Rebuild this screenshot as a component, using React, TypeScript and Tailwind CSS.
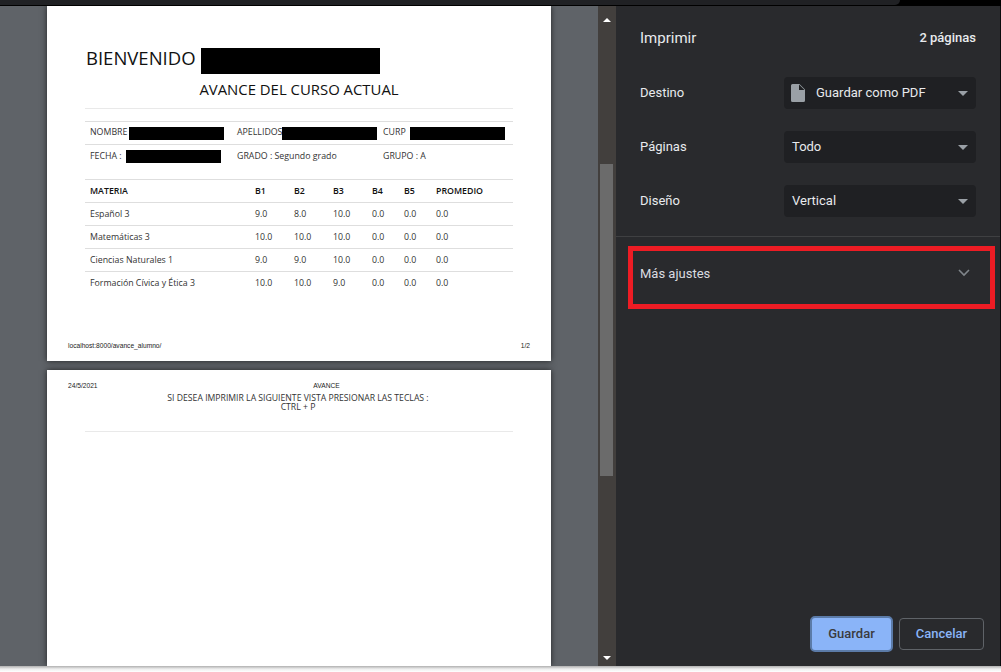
const doc = { fontFamily: '"Open Sans", sans-serif' };

const rows = [
  ["Español 3", "9.0", "8.0", "10.0", "0.0", "0.0", "0.0"],
  ["Matemáticas 3", "10.0", "10.0", "10.0", "0.0", "0.0", "0.0"],
  ["Ciencias Naturales 1", "9.0", "9.0", "10.0", "0.0", "0.0", "0.0"],
  ["Formación Cívica y Ética 3", "10.0", "10.0", "9.0", "0.0", "0.0", "0.0"],
];
const gridCols = "grid grid-cols-[165px_39px_39px_39px_32px_32px_1fr] pl-[5px]";

function Redact({ w }: { w: number }) {
  return <span className="inline-block h-[13px] bg-black" style={{ width: w }} />;
}

function Caret() {
  return (
    <svg width="10" height="5" viewBox="0 0 10 5" className="shrink-0">
      <path d="M0 0h10L5 5z" fill="#9aa0a6" />
    </svg>
  );
}

function Select({ label, icon }: { label: string; icon?: boolean }) {
  return (
    <div className="flex items-center w-[192px] h-8 rounded bg-[#1f2023] pl-2 pr-2">
      {icon && (
        <svg width="14" height="18" viewBox="0 0 14 18" className="-ml-px mr-[11px] shrink-0">
          <path d="M1.5 0H8.5L14 5.5V16.5a1.5 1.5 0 0 1-1.5 1.5H1.5A1.5 1.5 0 0 1 0 16.5V1.5A1.5 1.5 0 0 1 1.5 0z" fill="#9aa0a6" />
          <path d="M8 0.5V6H13.5z" fill="#1f2023" />
        </svg>
      )}
      <span className="text-[13px] text-[#e8eaed] flex-1 leading-[16px] pb-px">{label}</span>
      <Caret />
    </div>
  );
}

function SettingRow({ label, children }: { label: string; children: React.ReactNode }) {
  return (
    <div className="flex items-center justify-between h-8 pl-6 pr-6">
      <span className="text-[13px] text-[#e8eaed]">{label}</span>
      {children}
    </div>
  );
}

export default function App() {
  return (
    <div className="w-[1001px] h-[672px] overflow-hidden flex flex-col bg-white">
      <div className="h-[6px] shrink-0 flex border-b border-black bg-black">
        <div className="w-[900px] bg-[#202124] rounded-br-md" />
      </div>
      <div className="h-[660px] flex shrink-0 border-r border-[#0b0c0e]">
        <main className="w-[598px] bg-[#5f6368] overflow-hidden pl-[47px] flex flex-col gap-[9px]" style={doc}>
          <section className="w-[504px] h-[355px] shrink-0 bg-white shadow-[0_0_6px_rgba(0,0,0,0.65)] flex flex-col text-[#212529]">
            <div className="pl-[39px] pt-[42px] flex items-center h-[68px]">
              <span className="text-[18.5px] leading-none text-[#111] mb-[5px]">BIENVENIDO</span>
              <span className="inline-block ml-[5px] w-[179px] h-[26px] bg-black" />
            </div>
            <div className="text-center text-[14.9px] leading-5 mt-[5px] text-[#111]">AVANCE DEL CURSO ACTUAL</div>
            <div className="mx-[38px] mt-[9px] border-t border-[#e9e9e9]" />
            <div className="mx-[38px] mt-[12px] border-t border-[#dedede] text-[8.8px] text-[#333]">
              <div className="h-[23px] flex items-center pl-[5px] border-b border-[#dedede]">
                <span className="w-[39px]">NOMBRE</span>
                <Redact w={95} />
                <span className="ml-[13px] w-[45px]">APELLIDOS</span>
                <Redact w={95} />
                <span className="ml-[6px] w-[27px]">CURP</span>
                <Redact w={95} />
              </div>
              <div className="h-[35px] flex items-start pt-[5px] pl-[5px] border-b border-[#dedede]">
                <span className="w-[36px] leading-[13px]">FECHA :</span>
                <Redact w={95} />
                <span className="ml-[16px] w-[146px] leading-[13px]">GRADO : Segundo grado</span>
                <span className="leading-[13px]">GRUPO : A</span>
              </div>
              <div className={`${gridCols} h-[23px] pt-[2px] items-center border-b border-[#dedede] font-semibold text-[#111]`}>
                <span>MATERIA</span><span>B1</span><span>B2</span><span>B3</span><span>B4</span><span>B5</span><span>PROMEDIO</span>
              </div>
              {rows.map((r, i) => (
                <div key={r[0]} className={`${gridCols} h-[23px] items-center ${i < 3 ? "pt-[2px] border-b border-[#dedede]" : ""}`}>
                  {r.map((c, j) => <span key={j}>{c}</span>)}
                </div>
              ))}
            </div>
            <div className="mt-auto mb-[11px] px-[21px] flex justify-between text-[6.65px] leading-[8px] text-[#222]" style={{ fontFamily: '"Liberation Sans", sans-serif' }}>
              <span>localhost:8000/avance_alumno/</span>
              <span>1/2</span>
            </div>
          </section>
          <section className="w-[504px] h-[296px] shrink-0 bg-white shadow-[0_0_6px_rgba(0,0,0,0.65)] text-[#212529]">
            <div className="grid grid-cols-3 px-[21px] pt-[12px] text-[6.65px] leading-[8px] text-[#222]" style={{ fontFamily: '"Liberation Sans", sans-serif' }}>
              <span>24/5/2021</span>
              <span className="text-center pl-[55px]">AVANCE</span>
            </div>
            <div className="text-center text-[8.67px] leading-[9px] mt-[4px] pr-[2px] text-[#333]">
              <div>SI DESEA IMPRIMIR LA SIGUIENTE VISTA PRESIONAR LAS TECLAS :</div>
              <div>CTRL + P</div>
            </div>
            <div className="mx-[38px] mt-[19px] border-t border-[#e9e9e9]" />
          </section>
        </main>
        <div className="w-[18px] bg-[#423f3d] flex flex-col items-center justify-between pt-[12px] pb-[6px] relative shrink-0">
          <svg width="8" height="4" viewBox="0 0 8 4"><path d="M0 4h8L4 0z" fill="#fff" /></svg>
          <div className="absolute left-[2px] top-[158px] w-[13px] h-[312px] bg-[#6b6b6b]" />
          <svg width="8" height="4" viewBox="0 0 8 4"><path d="M0 0h8L4 4z" fill="#fff" /></svg>
        </div>
        <aside className="flex-1 bg-[#292a2d] flex flex-col" style={{ fontFamily: 'Roboto, sans-serif' }}>
          <header className="flex items-center justify-between h-[32px] mt-[16px] pl-6 pr-6">
            <h1 className="text-[15px] font-normal text-[#e8eaed]">Imprimir</h1>
            <span className="text-[13px] font-medium text-[#e8eaed]">2 páginas</span>
          </header>
          <div className="flex flex-col gap-[22px] mt-[23px]">
            <SettingRow label="Destino"><Select label="Guardar como PDF" icon /></SettingRow>
            <SettingRow label="Páginas"><Select label="Todo" /></SettingRow>
            <SettingRow label="Diseño"><Select label="Vertical" /></SettingRow>
          </div>
          <div className="mt-[19px] border-t border-[#3f4042]" />
          <div className="mt-[9px] ml-3 mr-[5px] h-[63px] border-[5px] border-[#ed1c24] flex items-start justify-between pl-[7px] pr-5 pt-[14px]">
            <span className="text-[13px] leading-[18px] text-[#dadce0]">Más ajustes</span>
            <svg width="12" height="8" viewBox="0 0 12 8" className="mt-[4px]"><path d="M1 1l5 5 5-5" fill="none" stroke="#80868b" strokeWidth="1.6" /></svg>
          </div>
          <footer className="mt-auto mb-[14px] pr-4 flex justify-end items-center gap-[6px]">
            <button className="w-[83px] h-[36px] rounded-[5px] bg-[#8ab4f8] border-2 border-[#5b7ba8] text-[13px] font-medium text-[#3a3b3e]">Guardar</button>
            <button className="w-[85px] h-[32px] rounded-[4px] border border-[#5f6368] text-[13px] font-medium text-[#8ab4f8]">Cancelar</button>
          </footer>
        </aside>
      </div>
      <div className="h-[6px] bg-gradient-to-b from-[#b0b0b0] via-[#eeeeee] to-white" />
    </div>
  );
}
